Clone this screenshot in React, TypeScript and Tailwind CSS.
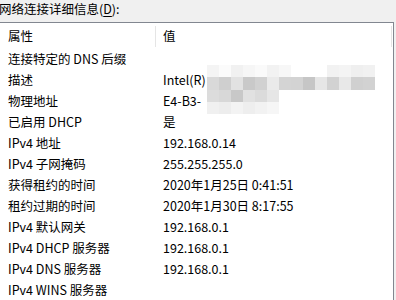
const rows: [string, string][] = [
  ['连接特定的 DNS 后缀', ''],
  ['描述', 'Intel(R)'],
  ['物理地址', 'E4-B3-'],
  ['已启用 DHCP', '是'],
  ['IPv4 地址', '192.168.0.14'],
  ['IPv4 子网掩码', '255.255.255.0'],
  ['获得租约的时间', '2020年1月25日 0:41:51'],
  ['租约过期的时间', '2020年1月30日 8:17:55'],
  ['IPv4 默认网关', '192.168.0.1'],
  ['IPv4 DHCP 服务器', '192.168.0.1'],
  ['IPv4 DNS 服务器', '192.168.0.1'],
  ['IPv4 WINS 服务器', ''],
];

// pixelated blur over the hidden parts of the description / MAC address
const mosaic: string[][] = [
  ['#f4f4f4', '#fbfbfb', '#f1f1f1', '#f6f6f6', '#fafafa', '#f2f2f2', '#f7f7f7', '#ffffff', '#ffffff', '#ffffff', '#f2f2f2', '#f4f4f4', '#efefef', '#f1f1f1'],
  ['#d9d9d9', '#cfcfcf', '#e2e2e2', '#c9c9c9', '#d1d1d1', '#eaeaea', '#d4d4d4', '#d3d3d3', '#c6c6c6', '#e6e6e6', '#d2d2d2', '#e8e8e8', '#d0d0d0', '#d2d2d2'],
  ['#dcdcdc', '#d8d8d8', '#c8c8c8', '#e1e1e1', '#dbdbdb', '#e6e6e6'],
  ['#f0f0f0', '#ededed', '#f3f3f3', '#eeeeee', '#f2f2f2', '#f6f6f6'],
];

function Mosaic() {
  return (
    <div className="absolute left-[207px] top-[65px] flex flex-col blur-[0.6px]">
      {mosaic.map((r, i) => (
        <div key={i} className={i === 1 ? 'flex h-[13px]' : 'flex h-[12px]'}>
          {r.map((c, j) => (
            <div key={j} className="w-[12px] h-full" style={{ backgroundColor: c }} />
          ))}
        </div>
      ))}
    </div>
  );
}

export default function App() {
  return (
    <div
      className="relative w-[396px] h-[300px] overflow-hidden bg-[#f0f0f0] text-black text-[12.5px]"
      style={{ fontFamily: '"Noto Sans CJK SC", "Liberation Sans", sans-serif' }}
    >
      <div className="h-[22px] -ml-[1px] leading-[18px]">
        网络连接详细信息(<span className="underline underline-offset-2">D</span>):
      </div>
      <div className="w-[394px] h-[278px] pt-[1px] bg-white border-t border-r border-[#828790]">
        <div className="flex h-[25px] items-center">
          <div className="w-[156px] h-[21px] pl-[8px] flex items-center border-r border-[#e5e5e5]">属性</div>
          <div className="flex-1 h-[21px] pl-[7px] flex items-center border-r border-[#e5e5e5] mr-[1px]">值</div>
        </div>
        {rows.map(([k, v]) => (
          <div key={k} className="flex h-[21px] items-center">
            <div className="w-[156px] pl-[8px]">{k}</div>
            <div className="flex-1 pl-[7px]">{v}</div>
          </div>
        ))}
      </div>
      <Mosaic />
    </div>
  );
}
